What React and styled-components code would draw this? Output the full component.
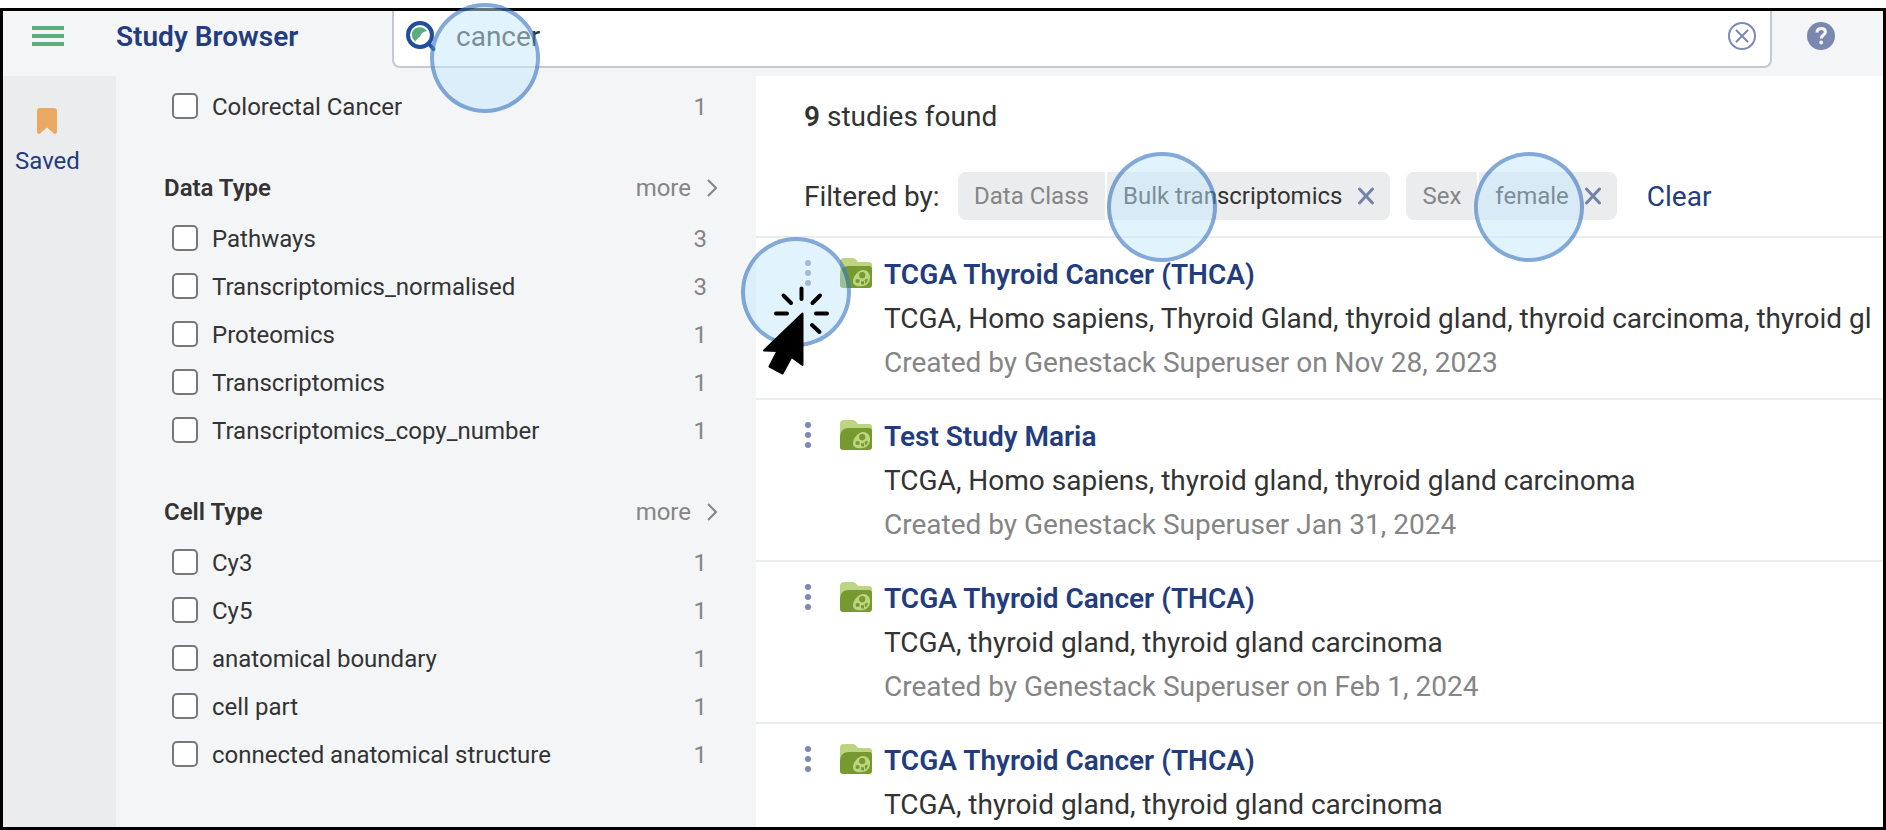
import React from 'react';
import styled, { createGlobalStyle } from 'styled-components';

const GlobalStyle = createGlobalStyle`
  *, *::before, *::after { box-sizing: border-box; }
  body {
    margin: 0;
    background: #fff;
    color: #333;
    font-family: Roboto, "Liberation Sans", sans-serif;
    font-size: 28px;
  }
  button, input { font: inherit; color: inherit; }
  h1, h2, h3, p, ul { margin: 0; padding: 0; }
`;

const Page = styled.div`
  position: relative;
  display: flex;
  height: 100vh;
  padding-top: 8px;
  overflow: hidden;
`;

const Frame = styled.div`
  display: flex;
  flex-direction: column;
  flex: 1;
  min-width: 0;
  border: 3px solid #000;
  overflow: hidden;
`;

const IconButton = styled.button`
  display: inline-flex;
  align-items: center;
  justify-content: center;
  flex: none;
  padding: 0;
  border: 0;
  background: none;
  cursor: pointer;
`;

const Header = styled.header`
  display: flex;
  flex: none;
  align-items: flex-start;
  height: 65px;
  padding: 0 48px 0 29px;
  background: #f4f5f7;
`;

const HeaderButton = styled(IconButton)`
  height: 50px;
`;

const AppTitle = styled.h1`
  flex: 0 0 328px;
  padding-left: 52px;
  color: #233c7e;
  font-size: 28px;
  font-weight: 600;
  line-height: 52px;
`;

const SearchBox = styled.label`
  display: flex;
  flex: 1;
  align-items: center;
  min-width: 0;
  height: 57px;
  margin-right: 35px;
  padding: 0 14px 5px 12px;
  border: 2px solid #c6c8cf;
  border-top: 0;
  border-radius: 0 0 8px 8px;
  background: #fff;
`;

const SearchInput = styled.input`
  flex: 1;
  min-width: 0;
  height: 40px;
  margin-left: 20px;
  padding: 0;
  border: 0;
  outline: 0;
  background: none;
`;

const Body = styled.div`
  display: flex;
  flex: 1;
  min-height: 0;
`;

const Rail = styled.nav`
  flex: 0 0 113px;
  padding: 32px 12px 0;
  background: #ebecee;
`;

const RailButton = styled.button`
  display: flex;
  flex-direction: column;
  align-items: center;
  gap: 12px;
  padding: 0;
  border: 0;
  background: none;
  color: #233c7e;
  font-size: 24px;
  line-height: 30px;
  cursor: pointer;
`;

const Filters = styled.aside`
  flex: 0 0 640px;
  padding: 6px 39px 0 48px;
  background: #f4f5f7;
  font-size: 24px;
  overflow: hidden;
`;

const FilterGroup = styled.section`
  margin-bottom: 32px;
`;

const GroupHead = styled.div`
  display: flex;
  align-items: center;
  justify-content: space-between;
  height: 52px;
`;

const GroupTitle = styled.h2`
  font-size: 24px;
  font-weight: 600;
  line-height: 30px;
`;

const MoreButton = styled(IconButton)`
  gap: 16px;
  color: #858585;
`;

const OptionRow = styled.label`
  display: flex;
  align-items: center;
  height: 48px;
  padding: 0 10px 0 8px;
`;

const Checkbox = styled.input`
  appearance: none;
  flex: none;
  width: 26px;
  height: 26px;
  margin: 0 14px 0 0;
  border: 2px solid #787878;
  border-radius: 5px;
  background: #fff;

  &:checked { background: #233c7e; }
`;

const OptionName = styled.span`
  flex: 1;
  padding-top: 2px;
`;

const Count = styled.span`
  padding-top: 2px;
  color: #858585;
`;

const Results = styled.main`
  flex: 1;
  min-width: 0;
  padding-top: 20px;
  background: #fff;
  overflow: hidden;
`;

const FoundLine = styled.p`
  padding-left: 48px;
  line-height: 42px;
`;

const FoundCount = styled.strong`
  font-weight: 600;
`;

const FilterBar = styled.div`
  display: flex;
  align-items: center;
  margin-top: 34px;
  padding: 0 48px 16px;
  border-bottom: 2px solid #ebecee;
  white-space: nowrap;
`;

const FilterLabel = styled.span`
  flex: 0 0 154px;
`;

const Chip = styled.div`
  display: flex;
  flex: none;
  gap: 2px;
  height: 48px;
  margin-right: 16px;
  border-radius: 8px;
  font-size: 24px;
  line-height: 48px;
  overflow: hidden;
`;

const ChipPart = styled.span`
  display: flex;
  align-items: center;
  gap: 16px;
  padding: 0 16px;
  background: #ebecee;
  color: ${(p) => (p.$muted ? '#858585' : '#333')};
`;

const ClearButton = styled(IconButton)`
  margin-left: 14px;
  color: #233c7e;
`;

const StudyList = styled.ul`
  list-style: none;
`;

const StudyItem = styled.li`
  display: flex;
  align-items: flex-start;
  height: 162px;
  padding: 14px 0 0 48px;
  border-bottom: 2px solid #ebecee;
`;

const MenuButton = styled(IconButton)`
  width: 8px;
  height: 42px;
  margin-right: 28px;
`;

const FolderIcon = styled.svg`
  flex: none;
  margin: 6px 12px 0 0;
`;

const StudyText = styled.div`
  flex: 1;
  min-width: 0;
  padding-top: 1px;
  line-height: 44px;
`;

const StudyTitle = styled.h3`
  font-size: 28px;
  font-weight: 600;
`;

const StudyLink = styled.a`
  color: #233c7e;
  text-decoration: none;
`;

const StudyLine = styled.p`
  color: ${(p) => (p.$muted ? '#858585' : '#333')};
  white-space: nowrap;
`;

const Highlight = styled.span`
  position: absolute;
  left: ${(p) => p.$x}px;
  top: ${(p) => p.$y}px;
  width: 110px;
  height: 110px;
  border: 4px solid rgba(63, 123, 195, 0.65);
  border-radius: 50%;
  background: rgba(195, 231, 251, 0.5);
  background-clip: padding-box;
  pointer-events: none;
`;

const Pointer = styled.svg`
  position: absolute;
  left: 763px;
  top: 286px;
  pointer-events: none;
`;

const Folder = () => (
  <FolderIcon width="32" height="30" viewBox="0 0 32 30" aria-hidden="true">
    <path d="M0 26V4Q0 0 4 0H13Q15 0 16 1.5L18 4H29Q32 4 32 7V26Z" fill="#bdd582" />
    <path d="M0 17Q0 8 9 8H29Q32 8 32 11V27Q32 30 29 30H3Q0 30 0 27Z" fill="#769a30" />
    <path
      d="M22.5 12C26.5 11.4 30 14.5 30 19C30 24.5 27 28 21 28.3C15.5 28.5 13 26.5 13 23.5C13 18.5 17.5 12.7 22.5 12Z"
      fill="#bdd582"
    />
    <circle cx="22.2" cy="17.2" r="3.1" fill="#769a30" />
    <ellipse cx="17.6" cy="23" rx="2.1" ry="2.1" fill="#769a30" />
    <path d="M21 23.2H24V26.4Q21 27 21 25Z" fill="#769a30" />
    <path d="M24.6 22Q28 19.6 27.8 21.6Q27.4 24.2 25.4 25.4Z" fill="#769a30" />
  </FolderIcon>
);

const CloseIcon = () => (
  <svg width="16" height="18" viewBox="0 0 16 18" aria-hidden="true">
    <path d="M1.5 2L14.5 16M14.5 2L1.5 16" stroke="#7482ab" strokeWidth="3" strokeLinecap="round" />
  </svg>
);

const groups = [
  { options: [['Colorectal Cancer', 1]] },
  {
    title: 'Data Type',
    options: [
      ['Pathways', 3],
      ['Transcriptomics_normalised', 3],
      ['Proteomics', 1],
      ['Transcriptomics', 1],
      ['Transcriptomics_copy_number', 1],
    ],
  },
  {
    title: 'Cell Type',
    options: [
      ['Cy3', 1],
      ['Cy5', 1],
      ['anatomical boundary', 1],
      ['cell part', 1],
      ['connected anatomical structure', 1],
    ],
  },
];

const chips = [
  { field: 'Data Class', value: 'Bulk transcriptomics' },
  { field: 'Sex', value: 'female' },
];

const studies = [
  {
    title: 'TCGA Thyroid Cancer (THCA)',
    tags: 'TCGA, Homo sapiens, Thyroid Gland, thyroid gland, thyroid carcinoma, thyroid gl',
    created: 'Created by Genestack Superuser on Nov 28, 2023',
  },
  {
    title: 'Test Study Maria',
    tags: 'TCGA, Homo sapiens, thyroid gland, thyroid gland carcinoma',
    created: 'Created by Genestack Superuser Jan 31, 2024',
  },
  {
    title: 'TCGA Thyroid Cancer (THCA)',
    tags: 'TCGA, thyroid gland, thyroid gland carcinoma',
    created: 'Created by Genestack Superuser on Feb 1, 2024',
  },
  {
    title: 'TCGA Thyroid Cancer (THCA)',
    tags: 'TCGA, thyroid gland, thyroid gland carcinoma',
  },
];

export default function App() {
  return (
    <Page>
      <GlobalStyle />
      <Frame>
        <Header>
          <HeaderButton aria-label="Menu">
            <svg width="32" height="20" viewBox="0 0 32 20" fill="#5bad7e" aria-hidden="true">
              <rect width="32" height="4" />
              <rect y="8" width="32" height="4" />
              <rect y="16" width="32" height="4" />
            </svg>
          </HeaderButton>
          <AppTitle>Study Browser</AppTitle>
          <SearchBox>
            <svg width="30" height="30" viewBox="0 0 30 30" aria-hidden="true">
              <circle cx="14" cy="14" r="12" fill="#fff" stroke="#1f4e9e" strokeWidth="4" />
              <path d="M22.5 22.5L27.5 28" stroke="#1f4e9e" strokeWidth="4" strokeLinecap="round" />
              <path
                d="M9.5 20.5C4.5 17 5 10.5 8.5 8C12.5 5 18 5.8 21 10C16.5 11 15.5 12.5 14.5 15C13.5 16.5 11 17 9.5 20.5Z"
                fill="#5bad7e"
              />
            </svg>
            <SearchInput type="text" aria-label="Search studies" defaultValue="cancer" />
            <IconButton aria-label="Clear search">
              <svg width="28" height="28" viewBox="0 0 28 28" fill="none" stroke="#7b8ab2" strokeWidth="2" aria-hidden="true">
                <circle cx="14" cy="14" r="13" />
                <path d="M8.5 8.5L19.5 19.5M19.5 8.5L8.5 19.5" strokeLinecap="round" />
              </svg>
            </IconButton>
          </SearchBox>
          <HeaderButton aria-label="Help">
            <svg width="28" height="28" viewBox="0 0 28 28" aria-hidden="true">
              <circle cx="14" cy="14" r="14" fill="#7a88b0" />
              <path
                d="M10 10.5C10 7.8 11.6 6.5 14.2 6.5C16.8 6.5 18.4 8 18.4 10.1C18.4 13.2 14.2 12.8 14.2 16.5"
                fill="none"
                stroke="#f4f5f7"
                strokeWidth="3"
              />
              <circle cx="14.2" cy="20.5" r="1.9" fill="#f4f5f7" />
            </svg>
          </HeaderButton>
        </Header>
        <Body>
          <Rail>
            <RailButton>
              <svg width="20" height="26" viewBox="0 0 20 26" aria-hidden="true">
                <path
                  d="M0 3Q0 0 3 0H17Q20 0 20 3V24Q20 26 17.5 26L10 19.5L2.5 26Q0 26 0 24Z"
                  fill="#e9a962"
                />
              </svg>
              Saved
            </RailButton>
          </Rail>
          <Filters>
            {groups.map((group, i) => (
              <FilterGroup key={i}>
                {group.title && (
                  <GroupHead>
                    <GroupTitle>{group.title}</GroupTitle>
                    <MoreButton>
                      more
                      <svg width="10" height="18" viewBox="0 0 10 18" fill="none" aria-hidden="true">
                        <path d="M1 1L9 9L1 17" stroke="#858585" strokeWidth="2" />
                      </svg>
                    </MoreButton>
                  </GroupHead>
                )}
                {group.options.map(([name, count]) => (
                  <OptionRow key={name}>
                    <Checkbox type="checkbox" />
                    <OptionName>{name}</OptionName>
                    <Count>{count}</Count>
                  </OptionRow>
                ))}
              </FilterGroup>
            ))}
          </Filters>
          <Results>
            <FoundLine>
              <FoundCount>9</FoundCount> studies found
            </FoundLine>
            <FilterBar>
              <FilterLabel>Filtered by:</FilterLabel>
              {chips.map((chip) => (
                <Chip key={chip.field}>
                  <ChipPart $muted>{chip.field}</ChipPart>
                  <ChipPart>
                    {chip.value}
                    <IconButton aria-label={`Remove ${chip.field} filter`}>
                      <CloseIcon />
                    </IconButton>
                  </ChipPart>
                </Chip>
              ))}
              <ClearButton>Clear</ClearButton>
            </FilterBar>
            <StudyList>
              {studies.map((study, i) => (
                <StudyItem key={i}>
                  <MenuButton aria-label="Study actions">
                    <svg width="8" height="28" viewBox="0 0 8 28" fill="#7b8ab2" aria-hidden="true">
                      <circle cx="4" cy="4" r="3" />
                      <circle cx="4" cy="14" r="3" />
                      <circle cx="4" cy="24" r="3" />
                    </svg>
                  </MenuButton>
                  <Folder />
                  <StudyText>
                    <StudyTitle>
                      <StudyLink href="#study">{study.title}</StudyLink>
                    </StudyTitle>
                    <StudyLine>{study.tags}</StudyLine>
                    {study.created && <StudyLine $muted>{study.created}</StudyLine>}
                  </StudyText>
                </StudyItem>
              ))}
            </StudyList>
          </Results>
        </Body>
      </Frame>
      <Highlight $x={430} $y={3} />
      <Highlight $x={1107} $y={152} />
      <Highlight $x={1474} $y={152} />
      <Highlight $x={741} $y={237} />
      <Pointer width="67" height="89" viewBox="0 0 67 89" aria-hidden="true">
        <path
          d="M38.5 2.5V13M13 27.5H24M53 27.5H64M20.5 9.5L28 17M57 9.5L49.5 17M49 39L56.5 46"
          stroke="#000"
          strokeWidth="4"
          strokeLinecap="round"
        />
        <path
          d="M39.5 27.5L39.5 79L28.5 71L19.5 87.5L6.5 80.5L14.5 65L1 64.5Z"
          stroke="#000"
          strokeWidth="2"
          strokeLinejoin="round"
        />
      </Pointer>
    </Page>
  );
}
